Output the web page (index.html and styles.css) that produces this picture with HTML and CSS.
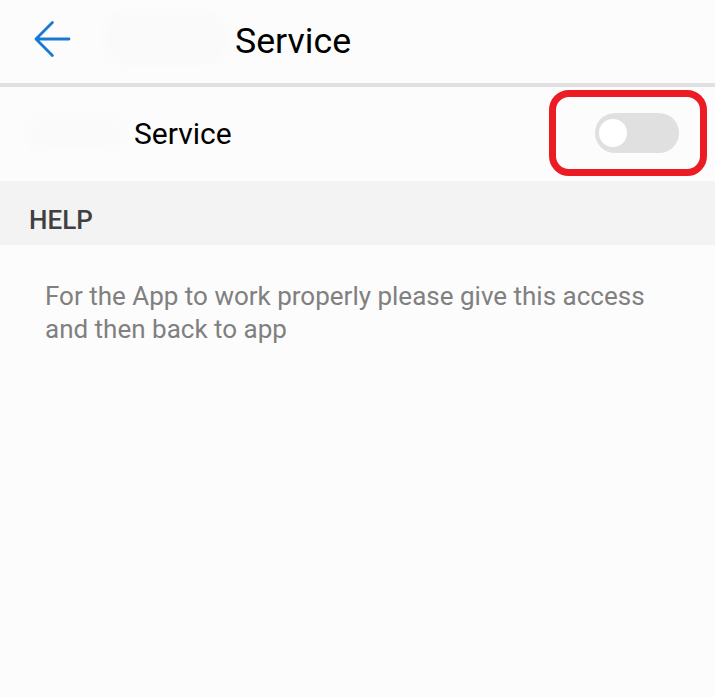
FILE: index.html
```html
<!DOCTYPE html>
<html lang="en">
<head>
<meta charset="utf-8">
<title>Service</title>
<link rel="stylesheet" href="styles.css">
</head>
<body>
<header class="topbar">
  <svg class="back" width="40" height="40" viewBox="0 0 40 40" aria-hidden="true"><path d="M20.400 3.500 4 20 20.400 36.500M4 20H37"/></svg>
  <span class="smudge smudge-title"></span>
  <h1 class="title">Service</h1>
</header>
<main>
  <section class="setting">
    <span class="smudge smudge-label"></span>
    <span class="label">Service</span>
    <div class="highlight"><div class="switch"><div class="knob"></div></div></div>
  </section>
  <h2 class="heading">HELP</h2>
  <p class="help">For the App to work properly please give this access<br>and then back to app</p>
</main>
</body>
</html>
```
FILE: styles.css
```css
* { box-sizing: border-box; }
body {
  margin: 0;
  min-height: 697px;
  background: #fcfcfc;
  font-family: Roboto, "Liberation Sans", sans-serif;
  color: #000;
}
.topbar {
  display: flex;
  align-items: center;
  height: 87px;
  padding: 0 0 5px 32px;
  border-bottom: 4px solid #e0e0e0;
}
.back {
  fill: none;
  stroke: #1878d2;
  stroke-width: 2.8;
  stroke-linecap: round;
  stroke-linejoin: round;
}
.smudge { background: #fafafa; filter: blur(3px); border-radius: 18px; }
.smudge-title { width: 122px; height: 52px; margin-left: 32px; }
.title { margin: 0 0 0 9px; padding-top: 4px; font-size: 35.7px; line-height: 42px; font-weight: 400; }
.setting {
  display: flex;
  align-items: center;
  height: 94px;
  padding: 0 8px 0 27px;
}
.smudge-label { width: 98px; height: 34px; }
.label { margin-left: 9px; font-size: 30px; line-height: 36px; }
.highlight {
  display: flex;
  align-items: center;
  width: 158px;
  height: 86px;
  margin: 0 0 2px auto;
  padding-left: 39px;
  border: 7px solid #ec1c24;
  border-radius: 20px;
}
.switch {
  width: 84px;
  height: 40px;
  padding: 6px 4px;
  border-radius: 20px;
  background: #e0e0e0;
}
.knob { width: 28px; height: 28px; border-radius: 50%; background: #fff; }
.heading {
  height: 64px;
  margin: 0;
  padding: 23px 0 0 29px;
  background: #f3f3f3;
  color: #404040;
  font-size: 26px;
  line-height: 32px;
  font-weight: 500;
}
.help {
  margin: 0;
  padding: 35px 0 0 45px;
  color: #808080;
  font-size: 26px;
  line-height: 33px;
  white-space: nowrap;
}
```
